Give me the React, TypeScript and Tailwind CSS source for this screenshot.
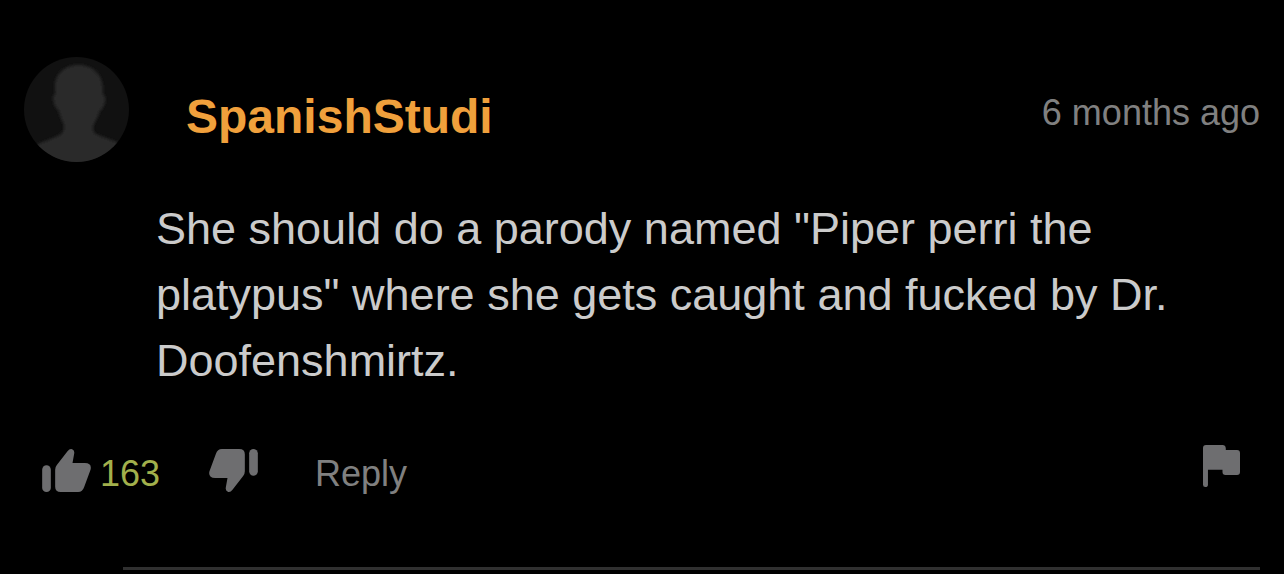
interface Comment {
  author: string;
  postedAt: string;
  body: string;
  votes: number;
}

const comment: Comment = {
  author: 'SpanishStudi',
  postedAt: '6 months ago',
  body: 'She should do a parody named "Piper perri the platypus" where she gets caught and fucked by Dr. Doofenshmirtz.',
  votes: 163,
};

function Avatar() {
  return (
    <svg className="size-[105px] flex-none rounded-full" viewBox="0 0 315 315" aria-hidden="true">
      <defs>
        <filter id="avatar-soft" x="-10%" y="-10%" width="120%" height="120%">
          <feGaussianBlur stdDeviation="4" />
        </filter>
      </defs>
      <rect width="315" height="315" fill="#111111" />
      <path
        filter="url(#avatar-soft)"
        fill="#2a2a2a"
        d="M163 24 C122 24 93 52 93 88 L94 110 C86 116 86 128 91 141 C94 152 101 158 105 162 C108 180 115 190 119 202 C121 216 119 226 108 233 C88 245 60 252 38 264 L0 330 H330 L280 256 C258 246 232 240 214 230 C205 222 206 210 210 200 C216 188 224 176 227 162 C234 156 240 148 243 134 C245 124 243 116 236 110 L236 88 C234 52 204 24 163 24 Z"
      />
    </svg>
  );
}

function ThumbIcon({ className = '' }: { className?: string }) {
  return (
    <svg className={`h-[43px] w-[49px] flex-none ${className}`} viewBox="0 0 146 129" fill="currentColor" aria-hidden="true">
      <rect x="0" y="49" width="26" height="80" rx="13" />
      <path d="M39 62 Q39 54 44 48 L76 7 Q83 -2 90 1 Q98 4 96 14 L91 42 H128 Q146 42 146 56 Q146 60 144 65 L126 114 Q121 129 108 129 H56 Q39 129 39 113 Z" />
    </svg>
  );
}

function FlagIcon() {
  return (
    <svg className="h-[42px] w-[37px]" viewBox="0 0 112 127" fill="currentColor" aria-hidden="true">
      <path d="M9 0 H59 Q68 0 69 10 V15 H103 Q112 15 112 24 V82 Q112 91 103 91 H68 Q59 91 59 82 V75 H15 V120 Q15 127 7 127 Q0 127 0 120 V9 Q0 0 9 0 Z" />
    </svg>
  );
}

export default function App() {
  return (
    <main className="min-h-screen bg-black px-6 pt-[57px] font-['Liberation_Sans',Arial,sans-serif]">
      <article>
        <header className="flex items-start">
          <Avatar />
          <a href="#author" className="mt-8 ml-[57px] text-[48px] leading-[56px] font-bold text-[#f0a03c]">
            {comment.author}
          </a>
          <time className="mt-9 ml-auto text-[36px] leading-[40px] text-[#808080]">{comment.postedAt}</time>
        </header>

        <p className="mt-[34px] pl-[132px] text-[45px] leading-[66px] text-[#cbcbcb]">{comment.body}</p>

        {/* Votes, reply and report */}
        <div className="mt-[51px] flex items-start pr-5 pl-[18px] text-[36px] leading-[40px] text-[#6e6e70]">
          <button type="button" aria-label="Like" className="mt-1">
            <ThumbIcon />
          </button>
          <span className="mt-[9px] ml-[9px] text-[#a2b04c]">{comment.votes}</span>
          <button type="button" aria-label="Dislike" className="mt-1 ml-[49px]">
            <ThumbIcon className="rotate-180" />
          </button>
          <button type="button" className="mt-[9px] ml-[57px] text-[#808080]">
            Reply
          </button>
          <button type="button" aria-label="Report" className="ml-auto">
            <FlagIcon />
          </button>
        </div>
      </article>
      <hr className="mt-[73px] ml-[99px] border-t-[3px] border-[#303030]" />
    </main>
  );
}
